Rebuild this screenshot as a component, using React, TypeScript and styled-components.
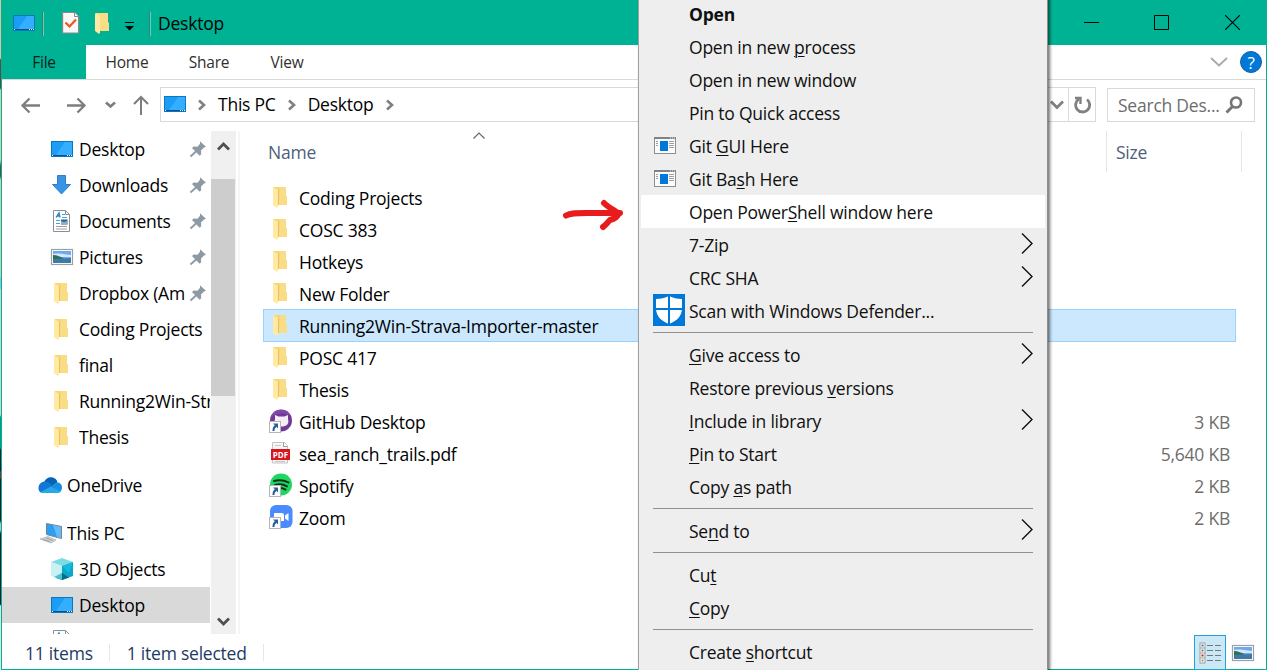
import React from "react";
import styled, { createGlobalStyle, css } from "styled-components";

const TEAL = "#00b294";

const Global = createGlobalStyle`
  * { box-sizing: border-box; }
  html, body { margin: 0; padding: 0; overflow: hidden; background: #fff; }
  body {
    font-family: "Open Sans", "Noto Sans", sans-serif;
    font-size: 17.5px;
    letter-spacing: -0.23px;
    color: #000;
  }
  svg { display: block; flex: none; }
`;

const Screen = styled.div`
  position: relative;
  display: flex;
  width: 1267px;
  height: 670px;
  overflow: hidden;
`;

const Backdrop = styled.div`
  width: 1px;
  background: linear-gradient(#d9c9a0 0 58px, #5a4a48 60px 88px, #d8cfa8 90px 160px, #55504a 166px 176px,
    #d5ccb0 180px 276px, #8ac4e0 278px 288px, #cfd4d6 290px 415px, #0a9a84 417px 448px,
    #101830 450px 470px, #b02020 472px 478px, #0c1428 480px 520px, #c0c0c0 524px 530px, #101830 534px 604px,
    #dfe3e6 606px 100%);
`;

const Window = styled.div`
  flex: 1;
  display: flex;
  flex-direction: column;
  min-width: 0;
  background: #fff;
  border: 1px solid ${TEAL};
  border-top: 0;
`;

const TitleBar = styled.header`
  display: flex;
  align-items: center;
  height: 45px;
  flex: none;
  padding-left: 10px;
  background: ${TEAL};
`;

const TitleRule = styled.i<{ $ml: number; $mr: number }>`
  width: 2px;
  height: 24px;
  margin: 3px ${p => p.$mr}px 0 ${p => p.$ml}px;
  border-left: 1px solid #3d7c70;
  border-right: 1px solid #5ad6c0;
`;

const Title = styled.span`
  flex: 1;
  margin-left: 7px;
`;

const Caption = styled.div`
  display: flex;
  align-items: center;
  height: 45px;
  gap: 55px;
  margin-right: 26px;
`;

const Ribbon = styled.nav`
  display: flex;
  align-items: stretch;
  height: 35px;
  flex: none;
  border-bottom: 1px solid #dadada;
  font-size: 15.500px;
  color: #2f2f2f;
`;

const Tab = styled.span<{ $file?: boolean; $w: number }>`
  display: flex;
  align-items: center;
  justify-content: center;
  width: ${p => p.$w}px;
  ${p => p.$file && css`background: ${TEAL}; color: #0b1f1b;`}
`;

const RibbonEnd = styled.div`
  display: flex;
  align-items: center;
  gap: 12px;
  margin-left: auto;
  margin-right: 4px;
`;

const Help = styled.span`
  display: flex;
  align-items: center;
  justify-content: center;
  width: 22px;
  height: 22px;
  border-radius: 50%;
  border: 1px solid #1560a8;
  background: #0078d7;
  color: #fff;
  font-size: 17px;
  font-weight: 500;
  line-height: 1;
`;

const NavBar = styled.div`
  display: flex;
  align-items: flex-start;
  height: 51px;
  flex: none;
  padding-top: 7px;
`;

const NavButtons = styled.div`
  display: flex;
  align-items: center;
  width: 158px;
  height: 36px;
  padding-left: 18px;
`;

const Address = styled.div`
  display: flex;
  align-items: center;
  width: 936px;
  height: 35px;
  border: 1px solid #d9d9d9;
  padding-left: 2px;
`;

const AddressIcon = styled.span`
  margin: 0 11px 2px 0;
`;

const Crumb = styled.span`
  margin: 0 12px;
  padding-bottom: 1px;
`;

const AddressEnd = styled.div`
  display: flex;
  align-items: center;
  height: 33px;
  margin-left: auto;
`;

const Refresh = styled.div`
  display: flex;
  align-items: center;
  justify-content: center;
  width: 27px;
  height: 33px;
  margin-left: 4px;
  border-left: 1px solid #d9d9d9;
`;

const Search = styled.div`
  display: flex;
  align-items: center;
  justify-content: space-between;
  width: 148px;
  height: 34px;
  margin: 1px 0 0 11px;
  padding: 0 11px 0 10px;
  border: 1px solid #d9d9d9;
  color: #6d6d6d;
`;

const Body = styled.div`
  display: flex;
  flex: none;
  height: 503px;
`;

const Sidebar = styled.aside`
  width: 208px;
  height: 503px;
  overflow: hidden;
`;

const SideRow = styled.div<{ $indent?: boolean; $gap?: boolean; $on?: boolean }>`
  display: flex;
  align-items: center;
  height: 36px;
  padding-left: ${p => (p.$indent ? 48 : 35)}px;
  margin-top: ${p => (p.$gap ? 12 : 0)}px;
  background: ${p => (p.$on ? "#d9d9d9" : "transparent")};
`;

const SideIcon = styled.span<{ $w: number }>`
  display: flex;
  flex: none;
  width: ${p => p.$w}px;
`;

const SideText = styled.span<{ $clip?: boolean }>`
  flex: ${p => (p.$clip ? "0 0 107px" : "1 0 auto")};
  overflow: hidden;
  white-space: nowrap;
`;

const PinSlot = styled.span`
  margin-left: auto;
  padding-right: 3px;
`;

const ScrollTrack = styled.div`
  display: flex;
  flex-direction: column;
  align-items: center;
  width: 25px;
  margin-left: 1px;
  background: #f0f0f0;
`;

const ScrollButton = styled.div<{ $h: number }>`
  display: flex;
  align-items: center;
  justify-content: center;
  width: 25px;
  height: ${p => p.$h}px;
`;

const Thumb = styled.div`
  align-self: flex-start;
  width: 24px;
  height: 217px;
  margin-top: 18px;
  margin-bottom: auto;
  background: #cdcdcd;
`;

const Divider = styled.div`
  width: 2px;
  margin-left: 2px;
  background: #f5f5f5;
`;

const Main = styled.main`
  flex: 1;
  display: flex;
  flex-direction: column;
  min-width: 0;
`;

const Columns = styled.div`
  display: flex;
  height: 42px;
  padding-left: 28px;
  color: #4c607a;
`;

const NameColumn = styled.div`
  display: flex;
  width: 838px;
  line-height: 43px;
`;

const NameLabel = styled.span`
  width: 205px;
`;

const SortMark = styled.span`
  padding-top: 1px;
`;

const SizeColumn = styled.div`
  width: 136px;
  height: 41px;
  padding-left: 9px;
  line-height: 43px;
  border-left: 1px solid #e5e5e5;
  border-right: 1px solid #e5e5e5;
`;

const FileList = styled.div`
  padding: 8px 0 0 23px;
`;

const FileRow = styled.div<{ $on?: boolean }>`
  display: flex;
  align-items: center;
  width: 973px;
  height: 33px;
  margin-bottom: -1px;
  padding: 1px 5px 0 5px;
  border: 1px solid ${p => (p.$on ? "#99d1ff" : "transparent")};
  background: ${p => (p.$on ? "#cce8ff" : "transparent")};
`;

const FileIcon = styled.span`
  display: flex;
  width: 30px;
  flex: none;
  padding-bottom: 2px;
`;

const FileSize = styled.span`
  margin-left: auto;
  color: #6d6d6d;
`;

const Status = styled.footer`
  display: flex;
  align-items: center;
  flex: 1;
  padding: 1px 11px 0 23px;
  color: #1e3a63;
`;

const StatusRule = styled.i`
  width: 1px;
  height: 17px;
  margin: 0 17px 0 16px;
  background: #e6e6e6;
`;

const Views = styled.div`
  display: flex;
  align-items: center;
  gap: 5px;
  margin-left: auto;
`;

const ViewOn = styled.div`
  display: flex;
  align-items: center;
  justify-content: center;
  width: 32px;
  height: 35px;
  border: 1px solid #26a0da;
  background: #cbe8f6;
`;

const Menu = styled.div`
  position: absolute;
  left: 638px;
  top: -5px;
  width: 410px;
  height: 690px;
  padding-top: 1px;
  background: #eeeeee;
  border: 1px solid #a0a0a0;
  border-right-color: #8e8e8e;
  box-shadow: 2px 0 3px rgba(0, 0, 0, 0.55);
  color: #101010;
`;

const MenuItem = styled.div<{ $bold?: boolean; $on?: boolean }>`
  display: flex;
  align-items: center;
  height: 33px;
  margin: 0 2px;
  padding-right: 12px;
  font-weight: ${p => (p.$bold ? 700 : 400)};
  background: ${p => (p.$on ? "#fff" : "transparent")};
`;

const MenuIcon = styled.span`
  display: flex;
  flex: none;
  width: 48px;
  padding: 0 0 1px 12px;
`;

const MenuText = styled.span`
  flex: 1;
  white-space: pre;
  u { text-underline-offset: 2px; text-decoration-thickness: 1px; }
`;

const SubArrow = styled.span`
  padding-bottom: 2px;
`;

const MenuRule = styled.div`
  height: 11px;
  padding: 5px 14px 0;
  &::before { content: ""; display: block; height: 1px; background: #919191; }
`;

const Pointer = styled.svg`
  position: absolute;
  left: 560px;
  top: 197px;
`;

const Monitor = () => (
  <svg width="24" height="18" viewBox="0 0 24 18">
    <rect x="1.5" y="1.5" width="21" height="15" fill="#1aa0fb" stroke="#0878bf" />
    <path d="M2 2h13L6 15H2z" fill="#1b9df6" />
    <path d="M15 2h7v13H6z" fill="#36aeff" />
    <path d="M2 15.5h20" stroke="#0b4f8a" />
    <path d="M2 15.5h1M17 15.5h1M19 15.5h1M21 15.5h1" stroke="#fff" />
  </svg>
);

const Folder = () => (
  <svg width="24" height="22" viewBox="0 0 24 22">
    <path d="M5 1h12v9l1 1v8H5z" fill="#f7d774" />
    <path d="M11 1h6v9l1 1v8h-8z" fill="#f9dc86" />
    <path d="M9.500 4v15" stroke="#e8c25c" />
    <path d="M4 1l5 3v16.500L8 22l-4-3z" fill="#ffe9a3" />
  </svg>
);

const DownArrow = () => (
  <svg width="24" height="22" viewBox="0 0 24 22">
    <path d="M7.500 1.500h8v9h5L11.500 20 2.500 10.500h5z" fill="#3a94e4" stroke="#2b7fd0" />
  </svg>
);

const Doc = () => (
  <svg width="24" height="24" viewBox="0 0 24 24">
    <path d="M3.500 1.500h12l4 4v17h-16z" fill="#fff" stroke="#8b8f93" />
    <path d="M15.500 1.500v4h4" fill="none" stroke="#8b8f93" />
    <path d="M6 8.500 9 4l1 4.500M7 7h3" stroke="#1c86c7" strokeWidth="1.300" fill="none" />
    <path d="M12 5.500h3M12 8.500h5M6 11.500h4M6 14.500h4" stroke="#4aa3d8" />
    <path d="M6 17.500h11M6 20h11" stroke="#9a9ea2" />
    <rect x="11" y="10.500" width="6.500" height="5" fill="#2d5f8e" />
    <path d="M11 12l3 1 3-1v3h-6z" fill="#7fb3d5" />
  </svg>
);

const Picture = () => (
  <svg width="24" height="18" viewBox="0 0 24 18">
    <rect x="1.500" y="1.500" width="21" height="15" fill="#fff" stroke="#9aa0a6" strokeWidth="1.200" />
    <rect x="3" y="3" width="18" height="12" fill="#6ea8f0" />
    <path d="M3 6c5-1 9 0 18 1v2H3z" fill="#d5e8f7" />
    <path d="M3 7c4 0 8 2 11 3.500L3 12z" fill="#2f6e57" />
    <path d="M3 11l18-1v5H3z" fill="#3e7aa5" />
  </svg>
);

const Cloud = () => (
  <svg width="26" height="18" viewBox="0 0 26 18">
    <path d="M7 6.500C8.500 2 12 .8 15 1.200c3 .5 5 2.500 5.500 5L14 11z" fill="#0364b8" />
    <path d="M7 5.500c3-.5 5 1 13 7L4 16.500C0 15 .5 6.500 7 5.500z" fill="#0f78d4" />
    <path d="M20 6.500c3 0 5 2 5 5 0 2-1 3.500-2 4.500l-9-5z" fill="#1490df" />
    <path d="M3.500 16 14 10.500 23.500 15.500c-.7 1-1.700 1.500-3 1.500H6c-1 0-2-.3-2.500-1z" fill="#28a8ea" />
  </svg>
);

const Computer = () => (
  <svg width="26" height="24" viewBox="0 0 26 24">
    <path d="M9.500 2.500 24.500 5.500v12l-15-4z" fill="#2f9df0" stroke="#77848f" />
    <path d="M16 4l8 2v11l-4-1z" fill="#62bbff" />
    <path d="M3 18l8-2.500 8 3.500-5 3z" fill="#cfd3d7" stroke="#aab0b5" strokeWidth=".7" />
    <path d="M6 18.500l7 2M9 17l7 2.500" stroke="#8d959c" strokeWidth=".8" />
  </svg>
);

const Cube = () => (
  <svg width="24" height="24" viewBox="0 0 24 24">
    <path d="M12 1l11 4-11 4L1 5z" fill="#7fdbe3" />
    <path d="M1 5l11 4v14L1 19z" fill="#c9f0f2" />
    <path d="M23 5l-11 4v14l11-4z" fill="#0aa8c8" />
    <path d="M12 9l11-4-4 11z" fill="#13bcdc" />
    <path d="M12 16l7 4.500-7 2.500-6-2z" fill="#066b86" />
    <path d="M12 16v7l-8-3z" fill="#48c3cf" />
  </svg>
);

const Pin = () => (
  <svg width="18" height="18" viewBox="0 0 18 18">
    <path d="M11 1.200 17 6.800l-2 .7-3 3 .2 3.800-1.500 1.400L3 8 4.600 6.600l3.900.2 2.500-3z" fill="#8d99a3" />
    <path d="M7.500 11 1.500 16.500" stroke="#8d99a3" strokeWidth="1.800" />
  </svg>
);

type StrokeProps = { d: string; w: number; h: number; sw?: number; c?: string };
const Stroke = ({ d, w, h, sw = 2.4, c = "#808080" }: StrokeProps) => (
  <svg width={w} height={h} viewBox={`0 0 ${w} ${h}`} fill="none" stroke={c} strokeWidth={sw}>
    <path d={d} />
  </svg>
);

const CrumbChevron = () => <Stroke w={8} h={12} d="M1 1.500 6 6 1 10.500" sw={2.6} />;

const ScrollArrow = ({ up }: { up?: boolean }) => (
  <Stroke w={13} h={9} d={up ? "M1 7.500 6.500 2 12 7.500" : "M1 1.500 6.500 7 12 1.500"} sw={2.8} c="#505050" />
);

const ShortcutMark = () => (
  <>
    <rect x=".5" y="12.500" width="11" height="11" fill="#fff" stroke="#b5b5b5" />
    <path d="M4 14.500h5v5L7.500 18c-1.500 1-2 2-2 4h-2c0-3 .7-4.500 2.300-5.800z" fill="#2c5f9e" />
  </>
);

const GitHub = () => (
  <svg width="24" height="24" viewBox="0 0 24 24">
    <circle cx="12" cy="11.500" r="11" fill="#6e3a96" />
    <path d="M1.500 9a11 11 0 0 1 21-1c-6-5-14-5-21 1z" fill="#8148ac" />
    <path d="M6 6l3.500 1.500h6L19 6v4c1.500 5-1.500 7.500-6.500 7.500S4.500 15 6 10z" fill="#f4eef8" />
    <ShortcutMark />
  </svg>
);

const PdfBox = styled.span`
  position: relative;
  display: block;
`;
const PdfTag = styled.span`
  position: absolute;
  left: 2px;
  top: 8px;
  width: 19px;
  height: 11px;
  background: #d8141c;
  color: #fff;
  font-size: 8px;
  font-weight: 700;
  letter-spacing: 0;
  line-height: 11px;
  text-align: center;
`;
const Pdf = () => (
  <PdfBox>
    <svg width="24" height="24" viewBox="0 0 24 24">
      <path d="M3.500 1.500h12l3 3.500v17h-15z" fill="#f6f6f6" stroke="#c4c4c4" />
      <path d="M14.500 1.500v4h4" fill="#fff" stroke="#9a9a9a" />
      <path d="M6 4.500h6M6 20.500h10" stroke="#c8c8c8" />
    </svg>
    <PdfTag>PDF</PdfTag>
  </PdfBox>
);

const Spotify = () => (
  <svg width="24" height="24" viewBox="0 0 24 24">
    <circle cx="12" cy="11.500" r="11" fill="#1ed760" />
    <path d="M5 8c5-1.500 10-1 14.500 1.500M6 12c4-1.200 8.500-.8 12 1.300M7 15.500c3.500-.8 7-.5 9.500 1.200" fill="none" stroke="#10301c" strokeWidth="2" strokeLinecap="round" />
    <ShortcutMark />
  </svg>
);

const Zoom = () => (
  <svg width="24" height="24" viewBox="0 0 24 24">
    <rect x="1" y="0" width="22.500" height="23" rx="6" fill="#4a8cff" />
    <path d="M5 8h8c1.500 0 2 1 2 2v6H7c-1.500 0-2-1-2-2zM16 10.500 19.500 8v8L16 13.500z" fill="#fff" />
    <ShortcutMark />
  </svg>
);

const GitWindow = () => (
  <svg width="24" height="17" viewBox="-1 0 24 17">
    <rect x=".5" y=".5" width="21" height="16" fill="#fbfbfb" stroke="#8a8f94" />
    <path d="M0 1h22" stroke="#7d8388" strokeWidth="2" />
    <path d="M16 1h1M18 1h1M20 1h1" stroke="#e8e8e8" />
    <path d="M2 4.500h2M2 6.500h2M2 8.500h2M15 4.500h5M15 6.500h5M15 8.500h5M15 10.500h5" stroke="#9aa0a5" />
    <rect x="6" y="4" width="8" height="10" fill="#0078d7" />
  </svg>
);

const Shield = () => (
  <svg width="32" height="32" viewBox="0 0 32 32">
    <rect width="32" height="32" fill="#0078d7" />
    <path d="M16 2c4 2 8 3 13 3v9c0 8-5 13-13 16C8 27 3 22 3 14V5c5 0 9-1 13-3z" fill="#fff" />
    <path d="M16 1v30M2 15h28" stroke="#0078d7" strokeWidth="2" />
  </svg>
);

const CheckDoc = () => (
  <svg width="18" height="23" viewBox="0 0 18 23">
    <path d="M.6 1.500h12l4 4V22H.6z" fill="#f8f8f8" stroke="#8a8a8a" strokeWidth="1.200" />
    <path d="M12.500 1.500v4h4" fill="#fff" stroke="#8a8a8a" />
    <path d="M3.500 11.500 7.500 15.500 14 8.500" fill="none" stroke="#e8581c" strokeWidth="2.200" />
  </svg>
);

const DetailsIcon = () => (
  <svg width="22" height="22" viewBox="0 0 22 22">
    <rect x="1" y="1" width="5" height="20" fill="#fff" stroke="#9d9d9d" />
    <path d="M1 6h5M1 11h5M1 16h5" stroke="#9d9d9d" />
    <path d="M2.500 3.500h2" stroke="#3c78b0" strokeWidth="2" />
    <path d="M2.500 8.500h2" stroke="#777" strokeWidth="2" />
    <path d="M2.500 13.500h2" stroke="#c02020" strokeWidth="2" />
    <path d="M2.500 18.500h2" stroke="#90a070" strokeWidth="2" />
    <path d="M8 3.500h6M16 3.500h6M8 8.500h6M16 8.500h6M8 13.500h6M16 13.500h6M8 18.500h6M16 18.500h6" stroke="#777" />
  </svg>
);

type Side = { icon: React.ReactNode; text: string; pin?: boolean; root?: boolean; gap?: boolean; on?: boolean };
const side: Side[] = [
  { icon: <Monitor />, text: "Desktop", pin: true },
  { icon: <DownArrow />, text: "Downloads", pin: true },
  { icon: <Doc />, text: "Documents", pin: true },
  { icon: <Picture />, text: "Pictures", pin: true },
  { icon: <Folder />, text: "Dropbox (Am", pin: true },
  { icon: <Folder />, text: "Coding Projects" },
  { icon: <Folder />, text: "final" },
  { icon: <Folder />, text: "Running2Win-Str" },
  { icon: <Folder />, text: "Thesis" },
  { icon: <Cloud />, text: "OneDrive", root: true, gap: true },
  { icon: <Computer />, text: "This PC", root: true, gap: true },
  { icon: <Cube />, text: "3D Objects" },
  { icon: <Monitor />, text: "Desktop", on: true },
  { icon: <Doc />, text: "" },
];

const files: { icon: React.ReactNode; name: string; size?: string; on?: boolean }[] = [
  { icon: <Folder />, name: "Coding Projects" },
  { icon: <Folder />, name: "COSC 383" },
  { icon: <Folder />, name: "Hotkeys" },
  { icon: <Folder />, name: "New Folder" },
  { icon: <Folder />, name: "Running2Win-Strava-Importer-master", on: true },
  { icon: <Folder />, name: "POSC 417" },
  { icon: <Folder />, name: "Thesis" },
  { icon: <GitHub />, name: "GitHub Desktop", size: "3 KB" },
  { icon: <Pdf />, name: "sea_ranch_trails.pdf", size: "5,640 KB" },
  { icon: <Spotify />, name: "Spotify", size: "2 KB" },
  { icon: <Zoom />, name: "Zoom", size: "2 KB" },
];

type Item = { text: string; icon?: React.ReactNode; sub?: boolean; bold?: boolean; on?: boolean };
// An ampersand marks the access key; null is a separator.
const menu: (Item | null)[] = [
  { text: "Open", bold: true },
  { text: "Open in new &process" },
  { text: "Open in new window" },
  { text: "Pin to Quick access" },
  { text: "Git &GUI Here", icon: <GitWindow /> },
  { text: "Git Ba&sh Here", icon: <GitWindow /> },
  { text: "Open Power&Shell window here", on: true },
  { text: "7-Zip", sub: true },
  { text: "CRC SHA", sub: true },
  { text: "Scan with Windows Defender...", icon: <Shield /> },
  null,
  { text: "&Give access to", sub: true },
  { text: "Restore previous &versions" },
  { text: "&Include in library", sub: true },
  { text: "&Pin to Start" },
  { text: "Copy &as path" },
  null,
  { text: "Se&nd to", sub: true },
  null,
  { text: "Cu&t" },
  { text: "&Copy" },
  null,
  { text: "Create &shortcut" },
];

const AccessText = ({ text }: { text: string }) => {
  const i = text.indexOf("&");
  if (i < 0) return <MenuText>{text}</MenuText>;
  return (
    <MenuText>
      {text.slice(0, i)}
      <u>{text[i + 1]}</u>
      {text.slice(i + 2)}
    </MenuText>
  );
};

export default function App() {
  return (
    <Screen>
      <Global />
      <Backdrop />
      <Window>
        <TitleBar>
          <Monitor />
          <TitleRule $ml={6} $mr={18} />
          <CheckDoc />
          <svg width="62" height="22" viewBox="0 0 62 22">
            <g transform="translate(11 0)">
              <path d="M5 1h12v9l1 1v8H5z" fill="#f9dc86" />
              <path d="M4 1l5 3v16.500L8 22l-4-3z" fill="#ffe9a3" />
            </g>
            <path d="M45 10.500h9" stroke="#000" />
            <path d="M45 14h9l-4.500 4.500z" fill="#000" />
          </svg>
          <TitleRule $ml={7} $mr={0} />
          <Title>Desktop</Title>
          <Caption>
            <Stroke w={15} h={15} d="M0 7.500h15" sw={1} c="#000" />
            <Stroke w={16} h={15} d="M.5.500h14v14H.500z" sw={1} c="#000" />
            <Stroke w={15} h={15} d="M0 0 15 15M15 0 0 15" sw={1.1} c="#000" />
          </Caption>
        </TitleBar>
        <Ribbon>
          <Tab $file $w={84}>File</Tab>
          <Tab $w={82}>Home</Tab>
          <Tab $w={82}>Share</Tab>
          <Tab $w={74}>View</Tab>
          <RibbonEnd>
            <Stroke w={18} h={10} d="M1 1 9 8.500 17 1" sw={1.8} c="#a8a8a8" />
            <Help>?</Help>
          </RibbonEnd>
        </Ribbon>
        <NavBar>
          <NavButtons>
            <svg width="130" height="22" viewBox="0 0 130 22" fill="none" stroke="#7d7d7d" strokeWidth="2.300">
              <path d="M20 11.500H2.500M9.500 4.500l-7 7 7 7" />
              <path d="M47 11.500h17.500M57.500 4.500l7 7-7 7" />
              <path d="M86 8.500l4.500 4 4.500-4" strokeWidth="2.600" />
              <path d="M121 21V3M114 10l7-7 7 7" strokeWidth="2" />
            </svg>
          </NavButtons>
          <Address>
            <AddressIcon><Monitor /></AddressIcon>
            <CrumbChevron />
            <Crumb>This PC</Crumb>
            <CrumbChevron />
            <Crumb>Desktop</Crumb>
            <CrumbChevron />
            <AddressEnd>
              <Stroke w={14} h={10} d="M1 1.500 7 7.500 13 1.500" sw={2.8} />
              <Refresh>
                <svg width="18" height="18" viewBox="0 0 18 18" fill="none" stroke="#808080" strokeWidth="2.800">
                  <path d="M14 3.500A7 7 0 1 1 6 3" />
                  <path d="M2 2h5.500v6" strokeWidth="2.400" />
                </svg>
              </Refresh>
            </AddressEnd>
          </Address>
          <Search>
            <span>Search Des...</span>
            <svg width="18" height="18" viewBox="0 0 18 18" fill="none" stroke="#757575">
              <circle cx="11" cy="6.500" r="5" strokeWidth="2.600" />
              <path d="M7.500 10.500 1.500 16.500" strokeWidth="3" />
            </svg>
          </Search>
        </NavBar>
        <Body>
          <Sidebar>
            {side.map((s, i) => (
              <SideRow key={i} $indent={!s.root} $gap={s.gap} $on={s.on}>
                <SideIcon $w={s.root ? 30 : 29}>{s.icon}</SideIcon>
                <SideText $clip={s.pin}>{s.text}</SideText>
                {s.pin && <PinSlot><Pin /></PinSlot>}
              </SideRow>
            ))}
          </Sidebar>
          <ScrollTrack>
            <ScrollButton $h={30}><ScrollArrow up /></ScrollButton>
            <Thumb />
            <ScrollButton $h={26}><ScrollArrow /></ScrollButton>
          </ScrollTrack>
          <Divider />
          <Main>
            <Columns>
              <NameColumn>
                <NameLabel>Name</NameLabel>
                <SortMark><Stroke w={12} h={7} d="M.5 6.500 6 1 11.500 6.500" sw={1.2} c="#666" /></SortMark>
              </NameColumn>
              <SizeColumn>Size</SizeColumn>
            </Columns>
            <FileList>
              {files.map(f => (
                <FileRow key={f.name} $on={f.on}>
                  <FileIcon>{f.icon}</FileIcon>
                  <span>{f.name}</span>
                  {f.size && <FileSize>{f.size}</FileSize>}
                </FileRow>
              ))}
            </FileList>
          </Main>
        </Body>
        <Status>
          <span>11 items</span>
          <StatusRule />
          <span>1 item selected</span>
          <StatusRule />
          <Views>
            <ViewOn><DetailsIcon /></ViewOn>
            <Picture />
          </Views>
        </Status>
      </Window>
      <Pointer width="70" height="40" viewBox="0 0 70 40" fill="none" stroke="#e81c1c" strokeWidth="6" strokeLinecap="round" strokeLinejoin="round">
        <path d="M6 18.500c5-3 12-2.500 28-2.500l26 0" />
        <path d="M44 6c4 4 8 6 14 10 1 3-4 6-8 7-3 3-3 4-7 7" />
      </Pointer>
      <Menu>
        {menu.map((m, i) =>
          m === null ? (
            <MenuRule key={i} />
          ) : (
            <MenuItem key={i} $bold={m.bold} $on={m.on}>
              <MenuIcon>{m.icon}</MenuIcon>
              <AccessText text={m.text} />
              {m.sub && (
                <SubArrow>
                  <Stroke w={12} h={21} d="M1 .500 11 10.500 1 20.500" sw={1.4} c="#111" />
                </SubArrow>
              )}
            </MenuItem>
          )
        )}
      </Menu>
    </Screen>
  );
}
